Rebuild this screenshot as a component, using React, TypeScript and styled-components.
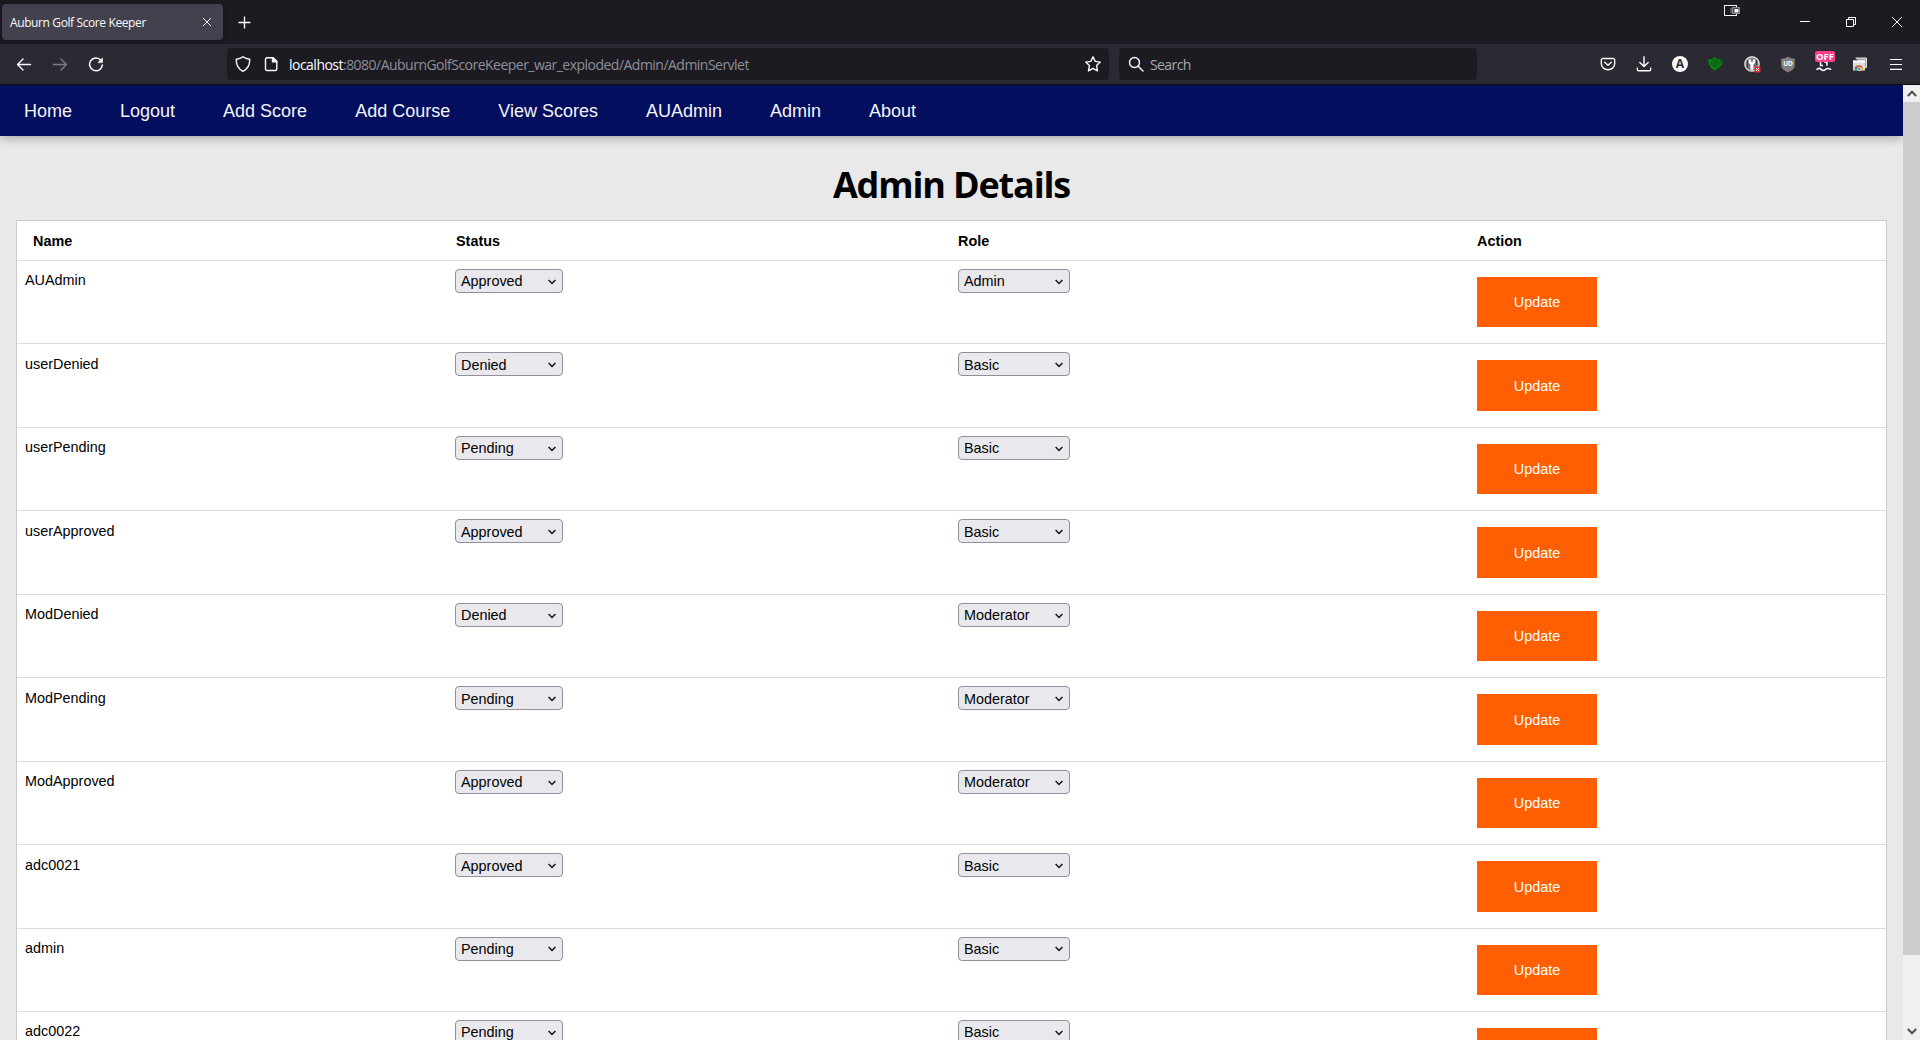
import React from "react";
import styled, { createGlobalStyle, css } from "styled-components";

const uiFont = '"Open Sans", "Noto Sans", sans-serif';
const pageFont = '"Liberation Sans", Arial, sans-serif';

const GlobalStyle = createGlobalStyle`
  *, *::before, *::after { box-sizing: border-box; }
  html, body { margin: 0; height: 100%; overflow: hidden; }
  svg { display: block; flex: none; }
`;

const Window = styled.div`
  display: flex;
  flex-direction: column;
  width: 1920px;
  height: 1040px;
  overflow: hidden;
  background: #e9e9e9;
`;

const TabStrip = styled.header`
  position: relative;
  display: flex;
  align-items: center;
  flex: none;
  height: 44px;
  padding: 0 0 0 2px;
  background: #1c1b22;
  color: #fbfbfe;
  font-family: ${uiFont};
`;

const Tab = styled.div`
  display: flex;
  align-items: center;
  justify-content: space-between;
  width: 221px;
  height: 36px;
  padding: 0 11px 0 8px;
  border-radius: 4px;
  background: #42414d;
  box-shadow: 0 0 4px rgba(0, 0, 0, 0.4);
  font-size: 12px;
`;

const TabTitle = styled.span`
  padding-top: 1px;
  white-space: nowrap;
  letter-spacing: -0.39px;
`;

const NewTab = styled.div`
  display: flex;
  padding: 1px 0 0 15px;
`;

const WindowButtons = styled.div`
  display: flex;
  margin-left: auto;
`;

const WindowButton = styled.div`
  display: flex;
  justify-content: center;
  width: 46px;
`;

const ScreenBadge = styled.div`
  position: absolute;
  left: 1724px;
  top: 5px;
`;

const Toolbar = styled.div`
  display: flex;
  align-items: center;
  flex: none;
  height: 41px;
  padding: 0 6px;
  border-bottom: 1px solid #0c0c0d;
  background: #2b2a33;
  color: #fbfbfe;
  font-family: ${uiFont};
`;

const ToolSlot = styled.div<{ $dim?: boolean }>`
  position: relative;
  display: flex;
  align-items: center;
  justify-content: center;
  width: 36px;
  height: 32px;
  opacity: ${(p) => (p.$dim ? 0.4 : 1)};
`;

const field = css`
  display: flex;
  align-items: center;
  height: 32px;
  border-radius: 4px;
  background: #1c1b22;
  white-space: nowrap;
`;

const UrlBar = styled.div`
  ${field}
  width: 882px;
  margin-left: 113px;
  padding: 0 8px;
`;

const PageIcon = styled.span`
  margin-left: 13px;
`;

const UrlText = styled.span`
  flex: 1;
  padding: 1px 0 0 11px;
  color: #8f8f98;
  font-size: 14px;
  letter-spacing: -0.52px;
`;

const Host = styled.span`
  color: #fbfbfe;
`;

const SearchBar = styled.div`
  ${field}
  width: 358px;
  margin-left: 10px;
  padding: 0 9px;
`;

const SearchText = styled.span`
  padding: 1px 0 0 6px;
  color: #a9a9b0;
  font-size: 14px;
  letter-spacing: -0.6px;
`;

const Extensions = styled.div`
  display: flex;
  margin-left: auto;
`;

const AccountBadge = styled.span`
  width: 16px;
  height: 16px;
  border-radius: 50%;
  background: #fbfbfe;
  color: #2b2a33;
  font: 700 12px/16px ${uiFont};
  text-align: center;
`;

const OffBadge = styled.span`
  position: absolute;
  left: 9px;
  top: 3px;
  width: 20px;
  height: 11px;
  border-radius: 2px;
  background: #ff3d8b;
  color: #fff;
  font: 700 9.5px/11px ${uiFont};
  text-align: center;
`;

const Viewport = styled.div`
  display: flex;
  flex: 1;
  min-height: 0;
`;

const Page = styled.div`
  flex: 1;
  overflow: hidden;
  color: #000;
  font-family: ${pageFont};
  font-size: 14.4px;
`;

const Nav = styled.nav`
  display: flex;
  height: 51px;
  background: #030e5f;
  box-shadow: 0 2px 10px rgba(0, 0, 0, 0.3);
`;

const NavLink = styled.a`
  padding: 1px 24px 0;
  color: #f4f4f4;
  font-size: 18px;
  line-height: 51px;
  white-space: nowrap;
`;

const Title = styled.h1`
  margin: 0;
  padding-top: 24px;
  height: 84px;
  font: 700 36px/49px ${uiFont};
  letter-spacing: -1.15px;
  text-align: center;
`;

const Table = styled.section`
  margin: 0 16px;
  border: 1px solid #ccc;
  border-bottom: 0;
  background: #fff;
`;

const Row = styled.div<{ $head?: boolean }>`
  display: grid;
  grid-template-columns: 430px 503px 519px 1fr;
  height: ${(p) => (p.$head ? "40px" : "83.45px")};
  border-bottom: 1px solid #ddd;
`;

const HeadCell = styled.div<{ $left?: number }>`
  padding: 0 8px 0 ${(p) => p.$left ?? 8}px;
  font-weight: 700;
  line-height: 40px;
`;

const Cell = styled.div<{ $action?: boolean }>`
  padding: ${(p) => (p.$action ? 16 : 8)}px 8px 0;
`;

const UserName = styled.span`
  display: block;
  padding-top: 3.45px;
  line-height: 16px;
`;

const Select = styled.div<{ $width: number }>`
  display: flex;
  justify-content: space-between;
  width: ${(p) => p.$width}px;
  height: 24px;
  padding: 3.45px 6px 0 5px;
  border: 1px solid #8f8f9d;
  border-radius: 4px;
  background: #e9e9ed;
  line-height: 16px;
`;

const Arrow = styled.svg`
  margin-top: 5.5px;
`;

const UpdateButton = styled.button`
  display: block;
  width: 120px;
  height: 50.45px;
  margin: 0;
  padding: 0.5px 0 0;
  border: 0;
  background: #ff5f00;
  color: #fff;
  font: 14.4px/16px ${pageFont};
`;

const Scrollbar = styled.div`
  display: flex;
  flex-direction: column;
  justify-content: space-between;
  width: 17px;
  background: #f0f0f0;
`;

const ScrollArrow = styled.div`
  display: flex;
  align-items: center;
  justify-content: center;
  height: 17px;
`;

const Thumb = styled.div`
  height: 853px;
  margin-bottom: auto;
  background: #cdcdcd;
`;

type GlyphProps = { d: string; size?: number; w?: number };

const Glyph = ({ d, size = 16, w = 1.4 }: GlyphProps) => (
  <svg width={size} height={size} viewBox="0 0 16 16" fill="none" stroke="currentColor" strokeWidth={w} strokeLinecap="round" strokeLinejoin="round">
    <path d={d} />
  </svg>
);

const Chevron = () => (
  <Arrow width="8" height="6" viewBox="0 0 8 6" fill="none" stroke="#15141a" strokeWidth="1.5">
    <path d="M.6 .9 4 4.4 7.4 .9" />
  </Arrow>
);

const GreenShieldIcon = () => (
  <svg width="18" height="16" viewBox="0 0 18 16" fill="none">
    <path d="M1 3.6C4 3.2 6 2.3 7.6 1c1.8 1.4 3.6 2.2 6.4 2.5l-.3 2.2 2.7-.6c-1 4-4.600 7.700-8.600 9.600C3.500 12.500 1.200 8.500 1 3.600z" fill="#08820b" />
    <path d="M10.800 4.400C7.500 3 4.400 4.600 4.500 7.300c0 2.600 2.900 4 5.100 2.500l5.700-4.500M9.800 6.300C8 5.600 6.600 6.400 6.800 7.800c.3 1 1.500 1 2.200.4l2.600-2.600" stroke="#243b2c" strokeWidth="0.9" />
  </svg>
);

const PasswordIcon = () => (
  <svg width="17" height="17" viewBox="0 0 17 17">
    <circle cx="8" cy="8" r="7.200" fill="#77777b" stroke="#f5f5f5" strokeWidth="1.200" />
    <path d="M4.600 3.200h2.300v2.500h2V3.200h2.300v3.500L9.400 8.500v5.200H6.500V8.500L4.600 6.700z" fill="#fff" />
    <path d="M3.500 4v7.500M12.500 4v5" stroke="#36363b" strokeWidth="1" />
    <rect x="10.500" y="10.500" width="6" height="6" fill="#e02f2f" />
    <path d="m12 12 3 3m0-3-3 3" stroke="#fff" strokeWidth="1" />
  </svg>
);

const UBlockIcon = () => (
  <svg width="16" height="17" viewBox="0 0 16 17">
    <path d="M8 .5c2 1.500 4.200 2.200 6.800 2.300V9c0 3.500-3 5.700-6.800 7.500C4.200 14.700 1.200 12.500 1.200 9V2.800C3.800 2.700 6 2 8 .5z" fill="#808080" />
    <text x="8" y="10" fill="#fff" fontSize="6.500" fontWeight="700" textAnchor="middle">UD</text>
  </svg>
);

const WavesIcon = () => (
  <svg width="16" height="18" viewBox="0 0 16 18" fill="none" stroke="#fbfbfe" strokeWidth="1.500">
    <path d="M4.500 6v4.500H7M8.500 7.200H11v3.600M.5 14.700c1.700-1.700 3.200-1.700 4.600-.3s3 1.400 4.500 0 3-1.400 5.600.3" />
  </svg>
);

const StoreIcon = () => (
  <svg width="16" height="16" viewBox="0 0 16 16">
    <path d="M3.500 2h11v9.500h-2" fill="#a9a9a9" stroke="#e3e3e3" strokeWidth="1" />
    <rect x="1" y="4.500" width="12" height="10" fill="#dedede" />
    <path d="M1 4.500h12v2H1z" fill="#fff" />
    <path d="M3 14.500a4.200 4.200 0 0 1 2-5.300l2 5.300z" fill="#34a853" />
    <path d="M3.400 11.500a4.300 4.300 0 0 1 7.600 0L7.200 13z" fill="#ea4335" />
    <path d="M8.500 11.500H11a4.200 4.200 0 0 1 .4 3H8z" fill="#fbbc05" />
    <circle cx="7.200" cy="13" r="1.700" fill="#4285f4" stroke="#fff" strokeWidth=".6" />
  </svg>
);

const links = ["Home", "Logout", "Add Score", "Add Course", "View Scores", "AUAdmin", "Admin", "About"];

const users: [string, string, string][] = [
  ["AUAdmin", "Approved", "Admin"],
  ["userDenied", "Denied", "Basic"],
  ["userPending", "Pending", "Basic"],
  ["userApproved", "Approved", "Basic"],
  ["ModDenied", "Denied", "Moderator"],
  ["ModPending", "Pending", "Moderator"],
  ["ModApproved", "Approved", "Moderator"],
  ["adc0021", "Approved", "Basic"],
  ["admin", "Pending", "Basic"],
  ["adc0022", "Pending", "Basic"],
];

export default function App() {
  return (
    <Window>
      <GlobalStyle />
      <TabStrip>
        <Tab>
          <TabTitle>Auburn Golf Score Keeper</TabTitle>
          <Glyph size={10} w={1.5} d="M2 2l12 12M14 2 2 14" />
        </Tab>
        <NewTab>
          <svg width="13" height="13" viewBox="0 0 13 13" stroke="currentColor" strokeWidth="1.300">
            <path d="M6.500 .5v12M.5 6.500h12" />
          </svg>
        </NewTab>
        <ScreenBadge>
          <svg width="16" height="11" viewBox="0 0 16 11" fill="none">
            <rect x=".5" y=".5" width="12" height="10" fill="#1c1b22" stroke="#f4f4f4" />
            <path d="M6 3h2v5H6z" fill="#55555c" />
            <rect x="8.500" y="2.500" width="7" height="6" fill="#4b4b55" stroke="#8b8b94" />
            <rect x="10.500" y="4" width="4" height="3.500" fill="#fff" />
          </svg>
        </ScreenBadge>
        <WindowButtons>
          <WindowButton>
            <svg width="10" height="10" viewBox="0 0 10 10" stroke="#fff"><path d="M0 4.500h10" /></svg>
          </WindowButton>
          <WindowButton>
            <svg width="10" height="10" viewBox="0 0 10 10" stroke="#fff" fill="none"><path d="M.5 2.500h7v7h-7zM2.500 2.500v-2h7v7h-2" /></svg>
          </WindowButton>
          <WindowButton>
            <svg width="10" height="10" viewBox="0 0 10 10" stroke="#fff" fill="none"><path d="m0 0 10 10M10 0 0 10" /></svg>
          </WindowButton>
        </WindowButtons>
      </TabStrip>

      <Toolbar>
        <ToolSlot><Glyph d="M14.500 8.500H1.500M7 3 1.500 8.500 7 14" /></ToolSlot>
        <ToolSlot $dim><Glyph d="M1.500 8.500h13M9 3 14.500 8.500 9 14" /></ToolSlot>
        <ToolSlot>
          <svg width="16" height="16" viewBox="0 0 16 16" fill="none" stroke="currentColor" strokeWidth="1.500">
            <path d="M12.900 4.200A6.400 6.400 0 1 0 14.400 9" strokeLinecap="round" />
            <path d="M14.500 2v4.600H9.900z" fill="currentColor" strokeWidth=".6" />
          </svg>
        </ToolSlot>
        <UrlBar>
          <Glyph d="M8 .8c2 1.500 4.200 2.200 6.700 2.500 .2 5.600-2 9.700-6.700 12-4.700-2.300-6.900-6.400-6.700-12C3.800 3 6 2.300 8 .8z" />
          <PageIcon>
            <svg width="14" height="16" viewBox="0 0 14 16" fill="none" stroke="currentColor" strokeWidth="1.400" strokeLinejoin="round">
              <path d="M3 1.700h6.200l3.600 3.600v7.700a1.500 1.500 0 0 1-1.500 1.500H3A1.500 1.500 0 0 1 1.500 13V3.200A1.500 1.500 0 0 1 3 1.700z" />
              <path d="M8.500 1.700v4.200h4.300z" fill="currentColor" />
            </svg>
          </PageIcon>
          <UrlText><Host>localhost</Host>:8080/AuburnGolfScoreKeeper_war_exploded/Admin/AdminServlet</UrlText>
          <Glyph d="M8 .8l2.200 4.600 5.100.7-3.700 3.500.9 5.200L8 12.300l-4.500 2.500.9-5.200L.7 6.100l5.100-.7z" />
        </UrlBar>
        <SearchBar>
          <Glyph d="M11.500 6.500a5 5 0 1 1-10 0 5 5 0 0 1 10 0zM10.200 10.200 15 15" w={1.400} />
          <SearchText>Search</SearchText>
        </SearchBar>
        <Extensions>
          <ToolSlot><Glyph d="M2.800 2.500h10.400a1.500 1.500 0 0 1 1.500 1.500v3.400c0 8.400-13.400 8.400-13.400 0V4a1.500 1.500 0 0 1 1.500-1.500zM4.700 6.300 8 9.300l3.300-3" /></ToolSlot>
          <ToolSlot><Glyph d="M8 .8v9.700M3.800 6.500 8 10.600l4.200-4.100M1.300 12v1.500a1.300 1.300 0 0 0 1.300 1.300h10.800a1.300 1.300 0 0 0 1.300-1.300V12" /></ToolSlot>
          <ToolSlot><AccountBadge>A</AccountBadge></ToolSlot>
          <ToolSlot><GreenShieldIcon /></ToolSlot>
          <ToolSlot><PasswordIcon /></ToolSlot>
          <ToolSlot><UBlockIcon /></ToolSlot>
          <ToolSlot><WavesIcon /><OffBadge>OFF</OffBadge></ToolSlot>
          <ToolSlot><StoreIcon /></ToolSlot>
          <ToolSlot>
            <svg width="12" height="12" viewBox="0 0 12 12" stroke="currentColor" strokeWidth="1.200"><path d="M0 1.500h12M0 6.500h12M0 11.300h12" /></svg>
          </ToolSlot>
        </Extensions>
      </Toolbar>

      <Viewport>
        <Page>
          <Nav>
            {links.map((l) => <NavLink key={l}>{l}</NavLink>)}
          </Nav>
          <Title>Admin Details</Title>
          <Table>
            <Row $head>
              <HeadCell $left={16}>Name</HeadCell>
              <HeadCell $left={9}>Status</HeadCell>
              <HeadCell>Role</HeadCell>
              <HeadCell>Action</HeadCell>
            </Row>
            {users.map(([name, status, role]) => (
              <Row key={name}>
                <Cell><UserName>{name}</UserName></Cell>
                <Cell><Select $width={108}>{status}<Chevron /></Select></Cell>
                <Cell><Select $width={112}>{role}<Chevron /></Select></Cell>
                <Cell $action><UpdateButton>Update</UpdateButton></Cell>
              </Row>
            ))}
          </Table>
        </Page>
        <Scrollbar>
          <ScrollArrow>
            <svg width="10" height="7" viewBox="0 0 10 7" fill="none" stroke="#505050" strokeWidth="2"><path d="M.8 6 5 1.700 9.200 6" /></svg>
          </ScrollArrow>
          <Thumb />
          <ScrollArrow>
            <svg width="10" height="7" viewBox="0 0 10 7" fill="none" stroke="#505050" strokeWidth="2"><path d="M.8 1 5 5.300 9.200 1" /></svg>
          </ScrollArrow>
        </Scrollbar>
      </Viewport>
    </Window>
  );
}
